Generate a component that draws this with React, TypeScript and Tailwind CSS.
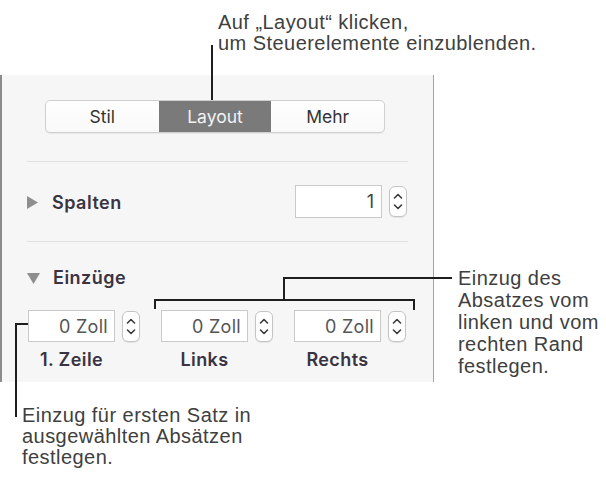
import React from "react";

function Stepper() {
  return (
    <div className="flex h-[31px] w-[18px] shrink-0 flex-col items-center justify-center gap-[5px] rounded-[6px] border border-[#c4c4c4] bg-white shadow-[0_1px_1px_rgba(0,0,0,0.08)]">
      <svg width="10" height="6" viewBox="0 0 10 6" fill="none">
        <path d="M1.5 5 L5 1.5 L8.5 5" stroke="#3a3a3a" strokeWidth="1.6" strokeLinecap="round" strokeLinejoin="round" />
      </svg>
      <svg width="10" height="6" viewBox="0 0 10 6" fill="none">
        <path d="M1.5 1 L5 4.5 L8.5 1" stroke="#3a3a3a" strokeWidth="1.6" strokeLinecap="round" strokeLinejoin="round" />
      </svg>
    </div>
  );
}

function NumField({ value, label }: { value: string; label: string }) {
  return (
    <div className="flex w-[112px] flex-col">
      <div className="flex items-center gap-[7px]">
        <div className="flex h-[32px] w-[87px] items-center justify-end border border-[#cacaca] bg-white pr-[6px] text-[18px] tracking-[0.3px] text-[#555]">
          {value}
        </div>
        <Stepper />
      </div>
      <div className="mt-[7px] w-[87px] text-center text-[18px] leading-[22px] font-semibold tracking-[0.4px] text-[#3a3342]">
        {label}
      </div>
    </div>
  );
}

export default function App() {
  const line = "absolute bg-[#1e1e1e]";
  return (
    <div className="relative h-[486px] w-[606px] overflow-hidden bg-white font-['Liberation_Sans',Arial,sans-serif] text-[20px] leading-[21px] tracking-[0.45px] text-[#404040]">
      {/* top callout */}
      <div className="pl-[218px] pt-[12px]">
        <p>Auf „Layout“ klicken,</p>
        <p>um Steuerelemente einzublenden.</p>
      </div>

      {/* inspector panel */}
      <div className="mt-[21px] h-[307px] w-[434px] border-l-2 border-r border-l-[#8c8c8c] border-r-[#a2a2a2] bg-[#f6f6f6] pl-[25px] pt-[25px] font-['Inter',sans-serif] tracking-normal">
        <div className="w-[381px]">
          <div className="ml-[18px] grid h-[33px] w-[340px] grid-cols-3 overflow-hidden rounded-[5px] border border-[#cfcfcf] bg-gradient-to-b from-white to-[#f9f9f9] text-[17.5px] text-[#333] shadow-[0_1px_1px_rgba(0,0,0,0.06)]">
            <div className="flex items-center justify-center">Stil</div>
            <div className="flex items-center justify-center bg-[#7a7a7a] text-[#f2f2f2]">Layout</div>
            <div className="flex items-center justify-center">Mehr</div>
          </div>

          <div className="mt-[28px] h-px bg-[#e0e0e0]" />

          <div className="flex h-[79px] items-center justify-between pr-[1px]">
            <div className="flex items-center gap-[14px] pt-[2px]">
              <svg width="11" height="13" viewBox="0 0 11 13">
                <polygon points="0,0 11,6.5 0,13" fill="#8e8e8e" />
              </svg>
              <span className="text-[18px] leading-[22px] font-semibold tracking-[0.5px] text-[#3a3342]">Spalten</span>
            </div>
            <div className="flex items-center gap-[7px]">
              <div className="flex h-[33px] w-[87px] items-center justify-end border border-[#cacaca] bg-white pr-[7px] text-[18px] text-[#444]">
                1
              </div>
              <Stepper />
            </div>
          </div>

          <div className="h-px bg-[#e0e0e0]" />

          <div className="mt-[25px] flex items-center gap-[13px]">
            <svg width="13" height="11" viewBox="0 0 13 11">
              <polygon points="0,0 13,0 6.5,11" fill="#8e8e8e" />
            </svg>
            <span className="text-[18px] leading-[22px] font-semibold tracking-[0.5px] text-[#3a3342]">Einzüge</span>
          </div>

          <div className="mt-[21px] flex gap-[21px] pl-[1px]">
            <NumField value="0 Zoll" label="1. Zeile" />
            <NumField value="0 Zoll" label="Links" />
            <NumField value="0 Zoll" label="Rechts" />
          </div>
        </div>
      </div>

      {/* callout lines */}
      <div className={`${line} left-[211px] top-[45px] h-[55px] w-[2px]`} />

      <div className={`${line} left-[283px] top-[277px] h-[2px] w-[169px]`} />
      <div className={`${line} left-[283px] top-[277px] h-[23px] w-[2px]`} />
      <div className={`${line} left-[154px] top-[299px] h-[2px] w-[261px]`} />
      <div className={`${line} left-[154px] top-[299px] h-[10px] w-[2px]`} />
      <div className={`${line} left-[413px] top-[299px] h-[11px] w-[2px]`} />

      <div className={`${line} left-[15px] top-[323px] h-[2px] w-[13px]`} />
      <div className={`${line} left-[15px] top-[323px] h-[94px] w-[2px]`} />

      {/* right callout */}
      <div className="absolute left-[458px] top-[267px] leading-[22px]">
        <p>Einzug des</p>
        <p>Absatzes vom</p>
        <p>linken und vom</p>
        <p>rechten Rand</p>
        <p>festlegen.</p>
      </div>

      {/* bottom callout */}
      <div className="absolute left-[22px] top-[405px]">
        <p>Einzug für ersten Satz in</p>
        <p>ausgewählten Absätzen</p>
        <p>festlegen.</p>
      </div>
    </div>
  );
}
